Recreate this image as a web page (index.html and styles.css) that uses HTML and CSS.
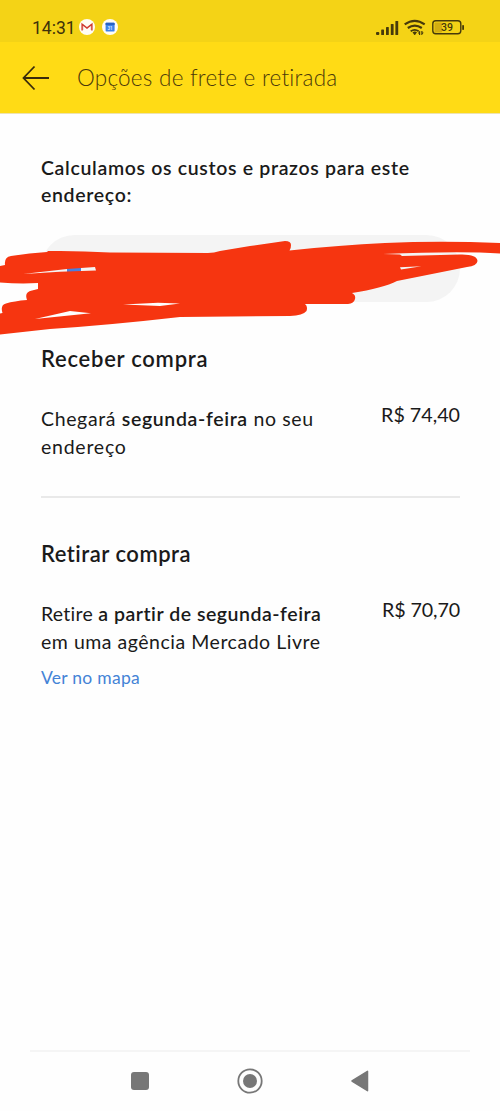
FILE: index.html
```html
<!DOCTYPE html>
<html lang="pt-BR">
<head>
<meta charset="utf-8">
<title>Opções de frete e retirada</title>
<link rel="stylesheet" href="styles.css">
</head>
<body>
<div class="screen">
  <div class="status">
    <span class="clock">14:31</span>
    <svg class="app gmail" width="16" height="16" viewBox="0 0 16 16"><circle cx="8" cy="8" r="8" fill="#fffdf5"/><path d="M4 11V5.500l4 3 4-3V11" fill="none" stroke="#efc3bd" stroke-width="1"/><path d="M3.100 11.600V5.200L8 9l4.900-3.800v6.400" fill="none" stroke="#cf3a30" stroke-width="1.400"/></svg>
    <svg class="app calendar" width="16" height="16" viewBox="0 0 16 16"><circle cx="8" cy="8" r="8" fill="#fffdf5"/><rect x="3.600" y="3.800" width="9" height="8.600" rx=".7" fill="#3d82e8"/><path d="M3.600 4.500q0-.7.7-.7h7.600q.7 0 .7.700v1.600h-9z" fill="#2862c4"/><text x="8.100" y="10.500" class="day">31</text></svg>
    <svg class="signals" width="90" height="18" viewBox="0 0 90 18">
      <g fill="#463a0b">
        <rect x="1" y="13" width="3.300" height="3" rx="1"/><rect x="6.200" y="10.500" width="2.800" height="5.500" rx=".6"/><rect x="11" y="8" width="2.800" height="8" rx=".6"/><rect x="15.800" y="5" width="2.800" height="11" rx=".6"/><rect x="20.400" y="2" width="2.800" height="14" rx=".6"/>
        <path d="M37.500 13.200q2.500-1.200 4.500 0l-2 2.800h-.6z"/>
        <path d="M44.500 12l-1.700 2.500h1.200v1.500h1.200V12zM47 16l1.700-2.500h-1.200V12h-1.200v4z"/>
      </g>
      <g fill="none" stroke="#463a0b" stroke-width="2.200"><path d="M29.700 5.400q10-7.200 20 0"/><path d="M32.800 9q7-4.900 14 0"/><path d="M35.700 12.300q4-2.700 8 0" stroke-width="1.800"/></g>
      <rect x="59.500" y="3.500" width="7.500" height="10" rx="1" fill="#d3ae11"/>
      <rect x="57.800" y="1.800" width="28" height="13" rx="3" fill="none" stroke="#463a0b" stroke-width="1.400"/>
      <rect x="87.200" y="6" width="1.800" height="5" rx=".8" fill="#463a0b"/>
      <text x="72" y="12" class="charge">39</text>
    </svg>
  </div>
  <header class="bar">
    <svg class="back" width="28" height="26" viewBox="0 0 28 26"><path d="M12.500 1.500L1.500 13l11 11.500M1.500 13h25.500" fill="none" stroke="#3a2b0b" stroke-width="1.800"/></svg>
    <h1 class="title">Opções de frete e retirada</h1>
  </header>
  <main class="content">
    <p class="intro"><span class="intro-a">Calculamos os custos e prazos para este</span><br><span class="intro-b">endereço:</span></p>
    <div class="address">
      <svg class="scribble" width="500" height="100" viewBox="0 237 500 100">
        <rect x="67" y="267" width="14" height="6" fill="#4a7fe0"/>
        <path fill="#f63510" fill-rule="evenodd" d="M0 266L5 265Q4 257 11 256Q30 253 47 252L48 251Q78 250.500 110 252.500L208 253Q214 253 220 251L250 246L285 241Q291 241 291 245Q291 249 289.500 250.500Q340 245 385 243Q440 240.500 500 243V253.500Q460 250.800 383 254L400 254.500L402 256L460 254.500Q477 254 477.500 261Q477 266 467 267L397 281Q383 288 352 293Q356 295 355 299Q354 303.500 348 304H305Q308 306 306.500 311Q303 315.500 290 316L180 317Q110 325 50 329L0 334.500V313.500L2.500 313Q0 305 6 303.500Q14 301 27 300Q24 292 32 290.500L38 289V283Q20 284 0 282.500ZM23 274L67 269L95 267L96 270.500Q60 271 23 274ZM35 319L70 311L91 313.300ZM123 304.500L158 302.800L180 303.500L160 306ZM400 267.300L421.500 266.300L401 269.500Z"/>
      </svg>
    </div>
    <section class="option first">
      <h2 class="heading receive">Receber compra</h2>
      <div class="row">
        <p class="detail"><span class="arrive">Chegará <b>segunda-feira</b> no seu</span><br><span class="arrive-b">endereço</span></p>
        <span class="price">R$ 74,40</span>
      </div>
    </section>
    <section class="option second">
      <h2 class="heading pickup">Retirar compra</h2>
      <div class="row">
        <p class="detail"><span class="collect">Retire <b>a partir de segunda-feira</b></span><br><span class="collect-b">em uma agência Mercado Livre</span></p>
        <span class="price price-b">R$ 70,70</span>
      </div>
      <a class="map">Ver no mapa</a>
    </section>
  </main>
  <nav class="nav">
    <svg width="20" height="20" viewBox="0 0 20 20"><rect x="1" y="1" width="18" height="18" rx="3" fill="#777"/></svg>
    <svg width="26" height="26" viewBox="0 0 26 26"><circle cx="13" cy="13" r="11.700" fill="none" stroke="#777" stroke-width="1.800"/><circle cx="13" cy="13" r="7" fill="#777"/></svg>
    <svg width="20" height="22" viewBox="0 0 20 22"><path d="M2 11L17.500 1.300V20.700z" fill="#777" stroke="#777" stroke-width="1.500" stroke-linejoin="round"/></svg>
  </nav>
</div>
</body>
</html>
```
FILE: styles.css
```css
* { box-sizing: border-box; }
body { margin: 0; background: #fefefe; color: #1a1a1a; font-family: Lato, "Liberation Sans", sans-serif; font-variant-ligatures: none; }
h1, h2, p { margin: 0; }
svg { display: block; flex: none; }
.screen { width: 500px; height: 1111px; display: flex; flex-direction: column; overflow: hidden; position: relative; }
.status { height: 42px; flex: none; background: #f4d316; display: flex; align-items: flex-start; padding: 19px 35px 0 32px; }
.clock { width: 47px; font: 400 17.500px/18px Roboto, sans-serif; color: #3d310a; white-space: nowrap; }
.calendar { margin-left: 7px; }
.signals { margin-left: auto; }
.day { font: 700 4.500px Roboto, sans-serif; fill: #d5e6ff; text-anchor: middle; }
.charge { font: 500 10.500px Roboto, sans-serif; fill: #463a0b; text-anchor: middle; }
.bar { height: 72px; flex: none; background: #ffdb15; border-bottom: 1px solid #eee3b0; display: flex; align-items: center; padding: 0 22px; gap: 27px; }
.title { font-size: 22.500px; font-weight: 300; line-height: 30px; letter-spacing: .24px; color: #4b390a; white-space: nowrap; }
.content { flex: 1; padding: 40px 40px 0 41px; }
.intro { font-size: 19.500px; font-weight: 600; line-height: 27px; letter-spacing: .66px; white-space: nowrap; }
.address { height: 67px; margin-top: 27px; border-radius: 34px; background: #f4f4f4; position: relative; }
.scribble { position: absolute; left: -41px; top: 2px; }
.heading { font-size: 22px; font-weight: 600; line-height: 28px; white-space: nowrap; }
.receive { letter-spacing: .75px; }
.pickup { letter-spacing: .5px; }
.first { padding-top: 43px; height: 196px; border-bottom: 2px solid #e9e9e9; }
.second { padding-top: 42px; }
.row { display: flex; justify-content: space-between; margin-top: 32px; }
.detail { font-size: 19.500px; line-height: 28px; white-space: nowrap; }
.detail b { font-weight: 600; }
.arrive { letter-spacing: .64px; }
.arrive-b { letter-spacing: .75px; }
.collect { letter-spacing: .25px; }
.collect b { letter-spacing: .52px; }
.collect-b { letter-spacing: .52px; }
.price { font-size: 19.700px; line-height: 19px; white-space: nowrap; }
.price-b { letter-spacing: -.12px; }
.map { display: block; margin-top: 10px; font-size: 17.500px; line-height: 24px; letter-spacing: .27px; color: #4483d6; }
.nav { height: 61px; flex: none; margin: 0 30px; border-top: 2px solid #f5f5f5; display: flex; justify-content: space-between; align-items: center; padding: 0 100px 2px; }
```
